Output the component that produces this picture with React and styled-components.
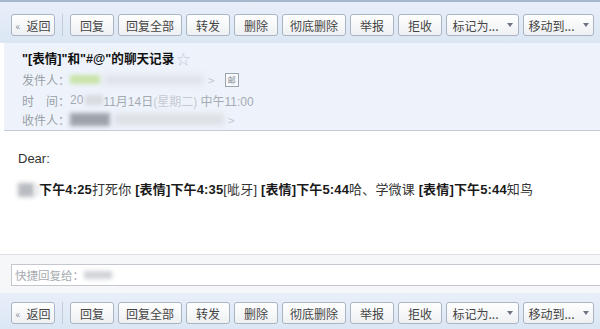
import React from 'react';
import styled, { createGlobalStyle } from 'styled-components';

const GlobalStyle = createGlobalStyle`
  html, body { margin: 0; padding: 0; background: #ffffff; }
  body {
    width: 600px;
    height: 329px;
    overflow: hidden;
    font-family: "Liberation Sans", "Noto Sans CJK SC", sans-serif;
    color: #333;
  }
`;

const Page = styled.div`
  width: 600px;
  height: 329px;
  display: flex;
  flex-direction: column;
  overflow: hidden;
`;

const Toolbar = styled.div`
  display: flex;
  align-items: flex-start;
  gap: 4px;
  height: ${p => p.h}px;
  padding-left: 11px;
  padding-top: ${p => p.top}px;
  box-sizing: border-box;
  background: linear-gradient(180deg, #e8eff9 0%, #dbe6f4 100%);
  border-top: ${p => (p.line ? '2px solid #a6b8d0' : 'none')};
  flex-shrink: 0;
`;

const Btn = styled.button`
  width: ${p => p.w}px;
  height: 22px;
  padding: 0;
  box-sizing: border-box;
  border: 1px solid #aab4c2;
  border-radius: 3px;
  background: linear-gradient(180deg, #ffffff 0%, #eef0f3 100%);
  font-family: "Noto Sans CJK SC", "Liberation Sans", sans-serif;
  font-size: 12px;
  color: #444;
  display: flex;
  align-items: center;
  justify-content: center;
  gap: 6px;
  flex-shrink: 0;
`;

const Back = styled.span`
  color: #8a94a3;
  font-size: 10px;
`;

const Caret = styled.span`
  width: 0;
  height: 0;
  border-left: 3px solid transparent;
  border-right: 3px solid transparent;
  border-top: 4px solid #6c7480;
  margin-left: 2px;
`;

const Sep = styled.span`
  width: 1px;
  height: 22px;
  background: #c3ccd8;
  margin: 0 3px 0 3px;
`;

const Header = styled.div`
  height: 88px;
  box-sizing: border-box;
  padding: 6px 18px 0 18px;
  background: #eef3fb;
  border-bottom: 1px solid #c7ccd4;
  margin-left: 4px;
  flex-shrink: 0;
`;

const Title = styled.div`
  font-size: 12.6px;
  font-weight: bold;
  line-height: 20px;
  color: #111;
  display: flex;
  align-items: center;
  font-family: "Liberation Sans", "Noto Sans CJK SC", sans-serif;
`;

const Star = styled.span`
  color: #c2c9da;
  font-weight: normal;
  font-size: 14px;
  margin-left: 2px;
`;

const Row = styled.div`
  display: flex;
  align-items: center;
  height: ${p => p.h || 20}px;
  font-size: 12px;
  color: #9aa0a8;
  font-family: "Noto Sans CJK SC", "Liberation Sans", sans-serif;
`;

const Label = styled.span`
  width: 48px;
  white-space: pre;
  flex-shrink: 0;
`;

const Blur = styled.span`
  display: inline-block;
  width: ${p => p.w}px;
  height: ${p => p.h || 10}px;
  background: ${p => p.c || '#c9ccd2'};
  filter: blur(${p => p.b || 3}px);
  margin-left: ${p => p.ml || 0}px;
  flex-shrink: 0;
`;

const Arrow = styled.span`
  color: #c3c8d0;
  margin-left: 4px;
  font-size: 12px;
`;

const Tag = styled.span`
  width: 12px;
  height: 12px;
  border: 1px solid #9aa3b0;
  margin-left: 10px;
  font-size: 8px;
  line-height: 12px;
  text-align: center;
  color: #7d8591;
  background: #f7f9fc;
`;

const DateText = styled.span`
  font-family: "Liberation Sans", "Noto Sans CJK SC", sans-serif;
  font-size: 12px;
  color: ${p => (p.faint ? '#c6cad0' : '#a4aab2')};
`;

const Body = styled.div`
  height: 123px;
  box-sizing: border-box;
  padding: 19px 0 0 18px;
  background: #ffffff;
  flex-shrink: 0;
`;

const Dear = styled.div`
  line-height: 18px;
  font-family: "Liberation Sans", sans-serif;
  font-size: 13px;
  color: #333;
`;

const Line = styled.div`
  margin-top: 13px;
  line-height: 18px;
  display: flex;
  align-items: center;
  white-space: pre;
  letter-spacing: 0.15px;
  font-family: "Liberation Sans", "Noto Sans CJK SC", sans-serif;
  font-size: 13px;
  color: #333;
`;

const B = styled.b`
  color: #1a1a1a;
`;

const Reply = styled.div`
  height: 39px;
  box-sizing: border-box;
  padding: 9px 0 0 11px;
  background: #f6f7f9;
  border-top: 1px solid #dde1e6;
  flex-shrink: 0;
`;

const Input = styled.div`
  height: 22px;
  box-sizing: border-box;
  border: 1px solid #c4c8ce;
  border-right: none;
  background: #fff;
  display: flex;
  align-items: center;
  padding-left: 3px;
  font-family: "Noto Sans CJK SC", sans-serif;
  font-size: 11.5px;
  color: #a7abb1;
`;

const buttons = [
  { t: '回复', w: 44 },
  { t: '回复全部', w: 64 },
  { t: '转发', w: 44 },
  { t: '删除', w: 44 },
  { t: '彻底删除', w: 64 },
  { t: '举报', w: 44 },
  { t: '拒收', w: 44 },
  { t: '标记为...', w: 73, caret: true },
  { t: '移动到...', w: 71, caret: true },
];

const Bar = ({ h, top, line }) => (
  <Toolbar h={h} top={top} line={line}>
    <Btn w={44}><Back>«</Back>返回</Btn>
    <Sep />
    {buttons.map(b => (
      <Btn key={b.t} w={b.w}>
        {b.t}
        {b.caret && <Caret />}
      </Btn>
    ))}
  </Toolbar>
);

export default function App() {
  return (
    <Page>
      <GlobalStyle />
      <Bar h={43} top={12} line />
      <Header>
        <Title>"[表情]"和"#@"的聊天记录<Star>☆</Star></Title>
        <Row h={21}>
          <Label>发件人：</Label>
          <Blur w={30} h={9} c="#c8e3a8" b={2} />
          <Blur w={100} h={10} c="#e0e3e9" b={3} ml={4} />
          <Arrow>&gt;</Arrow>
          <Tag>邮</Tag>
        </Row>
        <Row h={20}>
          <Label>{'时　间：'}</Label>
          <DateText>20</DateText>
          <Blur w={18} h={10} c="#d8dbe0" b={2} ml={2} />
          <DateText>11月14日</DateText>
          <DateText faint>(星期二)</DateText>
          <DateText>&nbsp;中午11:00</DateText>
        </Row>
        <Row h={19}>
          <Label>收件人：</Label>
          <Blur w={40} h={13} c="#9ea3ab" b={2} />
          <Blur w={110} h={11} c="#dcdfe4" b={3} ml={4} />
          <Arrow>&gt;</Arrow>
        </Row>
      </Header>
      <Body>
        <Dear>Dear:</Dear>
        <Line>
          <Blur w={16} h={14} c="#b9bcc1" b={2} />
          <Blur w={4} h={12} c="#e4e6e9" b={2} ml={1} />
          <B>下午4:25</B>打死你 <B>[表情]下午4:35</B>[呲牙] <B>[表情]下午5:44</B>哈、学微课 <B>[表情]下午5:44</B>知鸟
        </Line>
      </Body>
      <Reply>
        <Input>
          快捷回复给：
          <Blur w={28} h={8} c="#cfd2d7" b={2} />
        </Input>
      </Reply>
      <Bar h={36} top={9} />
    </Page>
  );
}
